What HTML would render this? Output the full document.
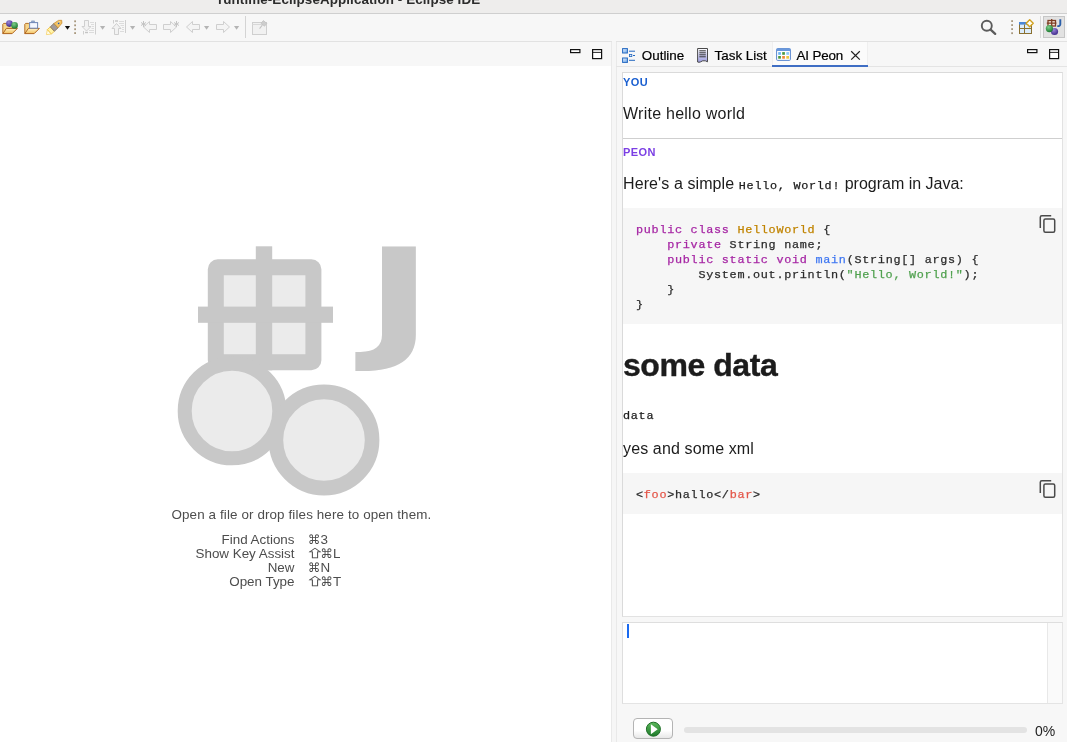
<!DOCTYPE html>
<html><head><meta charset="utf-8">
<style>
*{box-sizing:border-box;margin:0;padding:0}
html,body{width:1067px;height:742px;overflow:hidden;background:#f5f5f5;font-family:"Liberation Sans",sans-serif;color:#1a1a1a}
.abs{position:absolute}
#title{left:0;top:0;width:1067px;height:13px;background:#eeedec;overflow:hidden}
#title span{position:absolute;left:218px;top:-8.300px;font-weight:bold;font-size:13.4px;color:#2c2c2c;white-space:nowrap;line-height:15px;letter-spacing:.1px}
#tl1{left:0;top:13px;width:1067px;height:1px;background:#cfcfcf}
#toolbar{left:0;top:14px;width:1067px;height:27px;background:#f7f7f7}
#tl2{left:0;top:41px;width:1067px;height:1px;background:#e2e2e2}
#left{left:0;top:42px;width:611px;height:700px;background:#fff}
#lefttab{left:0;top:42px;width:611px;height:24px;background:#f7f7f7}
#leftborder{left:611px;top:42px;width:1px;height:700px;background:#e9e9e9}
#gap{left:612px;top:41px;width:4px;height:701px;background:#f6f6f6}
#right{left:616px;top:42px;width:451px;height:700px;background:#f7f7f7;border-left:1px solid #e9e9e9}
#righttabline{left:616px;top:66px;width:451px;height:1px;background:#e4e4e4}
.tabtxt{font-size:13.4px;top:48px;white-space:nowrap;color:#000;-webkit-text-stroke:.2px}
#chat{left:622px;top:72px;width:441px;height:545px;background:#fff;border:1px solid #dadada;border-right-color:#e2e2e2;border-bottom-color:#e2e2e2}
#input{left:622px;top:622px;width:441px;height:82px;background:#fff;border:1px solid #dedede;border-right-color:#e4e4e4;border-bottom-color:#e4e4e4}
#sb{left:1047px;top:623px;width:15px;height:80px;background:#fafafa;border-left:1px solid #e8e8e8}
#caret{left:627px;top:624px;width:2px;height:14px;background:#1a6af0}
.role{font-size:11px;font-weight:bold;letter-spacing:.45px;left:623px}
.p16{font-size:16px;left:623px;white-space:nowrap;color:#1c1c1c;letter-spacing:.2px}.p16 i{font-style:normal;letter-spacing:0}
.mono{font-family:"Liberation Mono",monospace;font-size:11.8px;letter-spacing:.72px;-webkit-text-stroke:.25px}
.code{background:#f6f6f6;left:623px;width:439px}
pre{font-family:"Liberation Mono",monospace;font-size:11.8px;letter-spacing:.72px;-webkit-text-stroke:.25px;line-height:15px;position:absolute;left:13px;color:#2b2b2b}
.k{color:#a626a4}.c{color:#c18401}.f{color:#4078f2}.s{color:#50a14f}.t{color:#e45649}
#layer{position:absolute;left:0;top:0;width:1067px;height:742px;will-change:transform}
.lt{font-size:13.4px;color:#4d4d4d;white-space:nowrap;line-height:15px}.lt.r{right:772.500px;text-align:right}.lt.k{left:309px}.lt.k b{font-weight:normal;font-family:"DejaVu Sans",sans-serif;font-size:12.6px;line-height:15px;vertical-align:top;margin-left:-1px}.lt.k u{text-decoration:none;display:inline-block;font-family:"Noto Sans CJK JP","DejaVu Sans",sans-serif;font-size:14px;line-height:15px;vertical-align:top;transform:translate(0px,-.6px) scale(1.25,.74);transform-origin:50% 60%;-webkit-text-stroke:.35px;margin-right:-.6px;margin-left:-1px}
</style></head><body><div id="layer">
<div id="title" class="abs"><span>runtime-EclipseApplication - Eclipse IDE</span></div>
<div id="tl1" class="abs"></div>
<div id="toolbar" class="abs"></div>
<div id="tl2" class="abs"></div>
<div id="left" class="abs"></div>
<div id="lefttab" class="abs"></div>
<div id="leftborder" class="abs"></div>
<div id="gap" class="abs"></div>
<div id="right" class="abs"></div>
<div id="righttabline" class="abs"></div>

<!-- tabs -->
<div class="abs" style="left:772px;top:42px;width:96px;height:23px;background:#fbfbfb;border-left:1px solid #efefef;border-right:1px solid #efefef"></div>
<div class="abs tabtxt" style="left:641.800px">Outline</div>
<div class="abs tabtxt" style="left:714.600px">Task List</div>
<div class="abs tabtxt" style="left:796.500px;letter-spacing:-.15px">AI Peon</div>
<div class="abs" style="left:772px;top:65px;width:96px;height:2px;background:#3f6ec4"></div>

<!-- chat -->
<div id="chat" class="abs"></div>
<div class="abs role" style="top:76px;color:#1a5fd0">YOU</div>
<div class="abs p16" style="top:105px;letter-spacing:.25px">Write hello world</div>
<div class="abs" style="left:623px;top:138px;width:439px;height:1px;background:#cfcfcf"></div>
<div class="abs role" style="top:146px;color:#7b3fe4">PEON</div>
<div class="abs p16" style="top:175px;letter-spacing:.1px">Here's a simple <span class="mono">Hello, World!</span><i> program in Java:</i></div>
<div class="abs code" style="top:208px;height:116px"><pre style="top:15px"><span class="k">public</span> <span class="k">class</span> <span class="c">HelloWorld</span> {
    <span class="k">private</span> String name;
    <span class="k">public</span> <span class="k">static</span> <span class="k">void</span> <span class="f">main</span>(String[] args) {
        System.out.println(<span class="s">"Hello, World!"</span>);
    }
}</pre></div>
<div class="abs" style="left:623px;top:347px;font-size:32px;font-weight:bold;white-space:nowrap;letter-spacing:-.45px;color:#1c1c1c;-webkit-text-stroke:.4px">some data</div>
<div class="abs mono" style="left:623px;top:409px;color:#1c1c1c">data</div>
<div class="abs p16" style="top:440px;letter-spacing:.13px">yes and some xml</div>
<div class="abs code" style="top:473px;height:41px"><pre style="top:15px">&lt;<span class="t">foo</span>&gt;hallo&lt;/<span class="t">bar</span>&gt;</pre></div>

<!-- input -->
<div id="input" class="abs"></div>
<div id="sb" class="abs"></div>
<div id="caret" class="abs"></div>

<!-- bottom -->
<div class="abs" style="left:684px;top:727px;width:343px;height:6px;background:#e3e3e3;border-radius:3px"></div>
<div class="abs" style="left:1035px;top:722.500px;font-size:14px;color:#222">0%</div>


<svg class="abs" style="left:0;top:0" width="1067" height="742" viewBox="0 0 1067 742">
<defs>
<linearGradient id="gf" x1="0" y1="0" x2="0" y2="1"><stop offset="0" stop-color="#fff3c8"/><stop offset="1" stop-color="#f3c15e"/></linearGradient>
<radialGradient id="gp" cx=".4" cy=".3" r=".7"><stop offset="0" stop-color="#9a86d8"/><stop offset="1" stop-color="#3f2a8c"/></radialGradient>
<radialGradient id="gg" cx=".4" cy=".3" r=".7"><stop offset="0" stop-color="#7fd08a"/><stop offset="1" stop-color="#1c7a30"/></radialGradient>
<linearGradient id="gt" x1="0" y1="0" x2="0" y2="1"><stop offset="0" stop-color="#ffffff"/><stop offset="1" stop-color="#9a9add"/></linearGradient>
<linearGradient id="gb" x1="0" y1="0" x2="1" y2="1"><stop offset="0" stop-color="#e8f2ff"/><stop offset="1" stop-color="#6aa5e8"/></linearGradient>
<linearGradient id="gbtn" x1="0" y1="0" x2="0" y2="1"><stop offset="0" stop-color="#ffffff"/><stop offset=".6" stop-color="#ffffff"/><stop offset="1" stop-color="#e6e6e6"/></linearGradient>
<linearGradient id="gplay" x1="0" y1="0" x2="0" y2="1"><stop offset="0" stop-color="#5cb85c"/><stop offset="1" stop-color="#1e7a2a"/></linearGradient>
</defs>

<!-- toolbar icons -->
<g transform="translate(2,20)"><path d="M0.8,4.2 L1.6,3.4 L4.6,3.4 L5.6,4.6 L11.6,4.6 L11.6,8.6 L0.8,13.4 Z" fill="#f7d68a" stroke="#b5702a" stroke-width="1"/><path d="M0.8,13.6 L4.4,8.4 L15.4,8.4 L10.2,13.6 Z" fill="url(#gf)" stroke="#b0651f" stroke-width="1" stroke-linejoin="round"/><circle cx="7.4" cy="3.6" r="3.3" fill="url(#gp)"/><circle cx="12.6" cy="5.4" r="3.3" fill="url(#gg)"/></g>
<g transform="translate(24,20)"><path d="M0.8,4.2 L1.6,3.4 L4.6,3.4 L5.6,4.6 L11.6,4.6 L11.6,8.6 L0.8,13.4 Z" fill="#f7d68a" stroke="#b5702a" stroke-width="1"/><path d="M0.8,13.6 L4.4,8.4 L15.4,8.4 L10.2,13.6 Z" fill="url(#gf)" stroke="#b0651f" stroke-width="1" stroke-linejoin="round"/><rect x="7" y="0.6" width="4" height="2.4" rx="1" fill="#8fa3c8"/><rect x="5.6" y="2.6" width="8" height="5.6" fill="#f4f7ff" stroke="#6f86b5" stroke-width="1"/></g>
<!-- pen -->
<g transform="translate(46,20)">
<path d="M0.4,14.6 L1.35,9.6 L5.45,14 Z" fill="#fffdf0" stroke="#f5d060" stroke-width=".8" stroke-linejoin="round"/>
<path d="M1.35,9.6 L4.3,6.85 L8.4,11.25 L5.45,14 Z" fill="#fff3a8" stroke="#ecb838" stroke-width=".8"/>
<path d="M4.3,6.85 L7.95,3.45 L12.05,7.85 L8.4,11.25 Z" fill="#a09a9a" stroke="#7d6c55" stroke-width=".8"/>
<path d="M7.95,3.45 L12.5,0.4 L15.7,0.3 L15.9,3.2 L12.05,7.85 Z" fill="#f4c465" stroke="#c98a2c" stroke-width=".8" stroke-linejoin="round"/>
<path d="M11.2,3.6 L13.8,1.4" stroke="#fbe6a8" stroke-width="1"/>
<circle cx="12.6" cy="3.3" r=".9" fill="#2a5aa8"/>
</g>
<path d="M64.9,26.0 h5.2 l-2.6,3.8 Z" fill="#111"/>
<g fill="#a8987e"><rect x="74.2" y="20.4" width="1.8" height="1.8"/><rect x="74.2" y="24.4" width="1.8" height="1.8"/><rect x="74.2" y="28.3" width="1.8" height="1.8"/><rect x="74.2" y="32.2" width="1.8" height="1.8"/></g>

<!-- disabled icons -->
<g fill="none" stroke="#cfcfcf" stroke-width="1">
<!-- next annotation -->
<path d="M84.5,20.5 H88.5 V26.5 H91 L86.5,31 L82,26.5 H84.5 Z" fill="#f2f2f2"/>
<path d="M95.5,22 V34.5 M83.5,31 V34.5"/>
<path d="M90,22.5 H94 M91,24.5 H94 M92,26.5 H94 M91.5,28.5 H94 M89,30.5 H94 M89,32.5 H94" stroke="#dcdcdc"/>
<path d="M85,32.5 H88" stroke="#c4c4c4" stroke-width="1.4"/>
<!-- prev annotation -->
<path d="M114.5,34.5 H118.5 V28.5 H121 L116.5,23.5 L112,28.5 H114.5 Z" fill="#f2f2f2"/>
<path d="M125.500,20 V33 M113.500,20 V23.5"/>
<path d="M119,21.500 H124 M119,23.500 H124 M120.500,25.500 H124 M122,27.500 H124 M122,29.500 H124 M120,31.500 H124" stroke="#dcdcdc"/>
<path d="M115,21 H118" stroke="#c4c4c4" stroke-width="1.4"/>
<!-- last edit -->
<path d="M143.500,27 L149.500,21.500 V24.500 H156.500 V29.500 H149.500 V32.500 Z" fill="#f4f4f4" stroke-linejoin="round"/>
<path d="M143.500,21 V27 M141,22.500 L146,25.500 M146,22.500 L141,25.500" stroke="#c4c4c4"/>
<!-- next edit -->
<path d="M176.500,27 L170.500,21.500 V24.500 H163.500 V29.500 H170.500 V32.500 Z" fill="#f4f4f4" stroke-linejoin="round"/>
<path d="M176.500,21 V27 M174,22.500 L179,25.500 M179,22.500 L174,25.500" stroke="#c4c4c4"/>
<!-- back -->
<path d="M186.500,27 L192.500,21.500 V24.500 H199.500 V29.500 H192.500 V32.500 Z" fill="#f4f4f4" stroke-linejoin="round"/>
<!-- forward -->
<path d="M229.500,27 L223.500,21.500 V24.500 H216.500 V29.500 H223.500 V32.500 Z" fill="#f4f4f4" stroke-linejoin="round"/>
<!-- pin editor -->
<rect x="252.500" y="22.500" width="14" height="12" fill="#f1f1f1"/>
<path d="M252.500,24.500 H266.500" stroke="#d8d8d8"/>
<path d="M259.600,28.600 L262.400,25" stroke="#c0c0c0" stroke-width="1.100"/>
<path d="M263.400,20.600 L266.900,23.500 L264.500,26.200 L261,23.300 Z" fill="#cdcdcd" stroke="#c2c2c2" stroke-width=".8" stroke-linejoin="round"/>
</g>
<g fill="#b4b4b4"><path d="M100.0,26.0 h5.2 l-2.6,3.8 Z"/><path d="M130.0,26.0 h5.2 l-2.6,3.8 Z"/><path d="M204.0,26.0 h5.2 l-2.6,3.8 Z"/><path d="M234.0,26.0 h5.2 l-2.6,3.8 Z"/></g>
<rect x="245" y="16" width="1" height="22" fill="#d4d4d4"/>

<!-- right toolbar -->
<circle cx="986.8" cy="25.8" r="5" fill="none" stroke="#5c5c5c" stroke-width="1.9"/>
<path d="M990.600,29.700 L995.200,33.900" stroke="#5c5c5c" stroke-width="2.300" stroke-linecap="round"/>
<g fill="#a8987e"><rect x="1011.2" y="20.200" width="1.8" height="1.8"/><rect x="1011.2" y="24.200" width="1.8" height="1.8"/><rect x="1011.2" y="28.200" width="1.8" height="1.8"/><rect x="1011.2" y="32.300" width="1.800" height="1.8"/></g>
<!-- open perspective -->
<rect x="1019.500" y="22.500" width="12" height="11" fill="#dcecfb" stroke="#8a7030" stroke-width="1"/>
<rect x="1019" y="22" width="13" height="2.600" fill="#4a86d8"/>
<path d="M1019.500,28.500 H1031.500 M1024.500,24.500 V33.500" stroke="#8a7030" stroke-width="1"/>
<path d="M1029.700,19.800 L1033.200,23.300 L1029.700,26.800 L1026.200,23.300 Z" fill="#fff6d0" stroke="#d0a020" stroke-width="1.500" stroke-linejoin="round"/>
<path d="M1029.700,21.300 V25.300 M1027.700,23.300 H1031.700" stroke="#fff" stroke-width="1.300"/>
<rect x="1040" y="16" width="1" height="22" fill="#dadada"/>
<!-- java perspective -->
<rect x="1043.500" y="16.500" width="21" height="21" fill="#e2e2e2" stroke="#c6c6c6"/>
<rect x="1048" y="20.500" width="7.500" height="5.500" fill="#f3e6da" stroke="#7e3d22" stroke-width="1.300"/>
<path d="M1051.700,19 V26 M1046.800,23.200 H1056.400" stroke="#7e3d22" stroke-width="1.300"/>
<path d="M1060.300,19.300 V24.300 Q1060.300,26.300 1057.300,26.100" fill="none" stroke="#2a5ea8" stroke-width="1.900"/>
<circle cx="1054.500" cy="31.500" r="3.600" fill="url(#gp)"/>
<circle cx="1049.400" cy="28.600" r="3.600" fill="url(#gg)"/>

<!-- left min/max -->
<rect x="570.600" y="49.600" width="9.300" height="3" fill="#fff" stroke="#111" stroke-width="1.200"/>
<rect x="592.600" y="49.600" width="9" height="9" fill="#fff" stroke="#111" stroke-width="1.200"/>
<path d="M592.600,52.400 H601.600" stroke="#111" stroke-width=".9"/>
<!-- right min/max -->
<rect x="1027.600" y="49.600" width="9.300" height="3" fill="#fff" stroke="#111" stroke-width="1.200"/>
<rect x="1049.600" y="49.600" width="9" height="9" fill="#fff" stroke="#111" stroke-width="1.200"/>
<path d="M1049.600,52.400 H1058.600" stroke="#111" stroke-width=".9"/>

<!-- outline icon -->
<rect x="622.600" y="48.600" width="4.800" height="4.400" fill="url(#gb)" stroke="#2468c0" stroke-width="1"/>
<rect x="622.600" y="58" width="4.800" height="4.400" fill="url(#gb)" stroke="#2468c0" stroke-width="1"/>
<path d="M629,51.200 H635 M629,60.300 H635 M633,55.500 H635" stroke="#2468c0" stroke-width="1"/>
<rect x="629.600" y="54.400" width="2.200" height="2.200" fill="#e4eefa" stroke="#2468c0" stroke-width=".8"/>
<!-- task list icon -->
<path d="M697.600,48.500 H707.500 V61.800 L705.300,60.800 Q702.500,60.300 700.500,61.900 Q699,62.600 697.600,62 Z" fill="url(#gt)" stroke="#4a4a4a" stroke-width="1"/>
<path d="M699.300,50.800 H705.800 M699.300,52.800 H705.800 M699.300,54.800 H705.800 M699.300,56.800 H705.800" stroke="#222" stroke-width=".9"/>
<!-- ai peon icon -->
<rect x="776.600" y="48.600" width="13.800" height="11.800" rx="1" fill="#fff" stroke="#5a88d0" stroke-width="1"/>
<rect x="776.600" y="48.600" width="13.800" height="2.400" fill="#6a98dc"/>
<rect x="778.200" y="52.100" width="2.700" height="2.700" fill="#6ab4f4"/><rect x="782.200" y="52.100" width="2.700" height="2.700" fill="#4a9a40"/><rect x="786.300" y="52.100" width="2.700" height="2.700" fill="#8ccaf8"/>
<rect x="778.200" y="56" width="2.700" height="2.700" fill="#4a9a40"/><rect x="782.200" y="56" width="2.700" height="2.700" fill="#f08a38"/><rect x="786.300" y="56" width="2.700" height="2.700" fill="#ecc840"/>
<path d="M851.200,51.200 L859.800,59.600 M859.800,51.200 L851.200,59.600" stroke="#222" stroke-width="1.200"/>

<!-- copy icons -->
<g fill="none" stroke="#4a4a4a" stroke-width="1.500">
<path d="M1040.300,228 V217.200 a1.500,1.500 0 0 1 1.500,-1.500 H1051.200"/>
<rect x="1043.900" y="219" width="10.800" height="13.200" rx="1.500"/>
<path d="M1040.300,493 V482.200 a1.500,1.500 0 0 1 1.500,-1.500 H1051.200"/>
<rect x="1043.900" y="484" width="10.800" height="13.200" rx="1.500"/>
</g>

<!-- play button -->
<rect x="633.500" y="718.500" width="39" height="20" rx="3.500" fill="url(#gbtn)" stroke="#b4b4b4"/>
<circle cx="653.400" cy="729.200" r="7" fill="url(#gplay)" stroke="#1f6e28" stroke-width="1"/>
<path d="M650.900,724.300 V734.200 L657.700,729.200 Z" fill="#fff"/>

<!-- watermark -->
<g>
<rect x="215.800" y="267.300" width="97.600" height="95" rx="2" fill="#ebebeb" stroke="#c8c8c8" stroke-width="16"/>
<rect x="255.800" y="246.300" width="16.400" height="124" fill="#c8c8c8"/>
<rect x="198" y="306.600" width="135" height="16.200" fill="#c8c8c8"/>
<circle cx="232" cy="411" r="47.300" fill="#ebebeb" stroke="#c8c8c8" stroke-width="14"/>
<circle cx="324" cy="440" r="48.100" fill="#ebebeb" stroke="#c8c8c8" stroke-width="14.600"/>
<text transform="translate(365.6,343.5) scale(1.2,0.885)" x="0" y="0" font-family="DejaVu Sans, sans-serif" font-weight="bold" font-size="150" fill="#c8c8c8">J</text>
</g>
</svg>

<!-- left placeholder text -->
<div class="abs lt" style="left:171.500px;top:507px;letter-spacing:.12px">Open a file or drop files here to open them.</div>
<div class="abs lt r" style="top:532px">Find Actions</div><div class="abs lt k" style="top:532px"><b>&#8984;</b>3</div>
<div class="abs lt r" style="top:546px">Show Key Assist</div><div class="abs lt k" style="top:546px"><u>&#8679;</u><b>&#8984;</b>L</div>
<div class="abs lt r" style="top:560px">New</div><div class="abs lt k" style="top:560px"><b>&#8984;</b>N</div>
<div class="abs lt r" style="top:574px">Open Type</div><div class="abs lt k" style="top:574px"><u>&#8679;</u><b>&#8984;</b>T</div>
</div></body></html>
